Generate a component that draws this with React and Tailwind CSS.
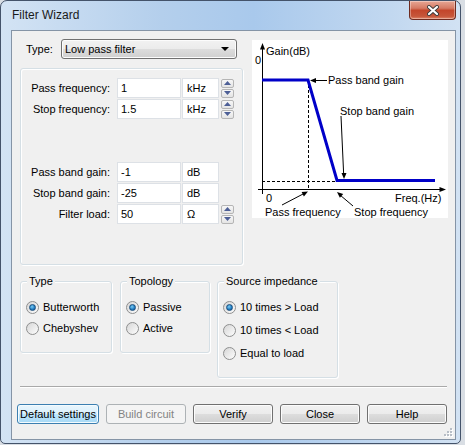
import React from 'react';

const btnBase =
  "flex h-[20px] items-center justify-center rounded-[3px] border text-[11px]";
const btnNormal =
  "border-[#707070] bg-[linear-gradient(#f2f2f2,#ebebeb_50%,#dddddd_50%,#cfcfcf)] shadow-[inset_0_0_0_1px_#fcfcfc] text-black";
const btnHot =
  "border-[#3c7fb1] bg-[linear-gradient(#eaf6fd,#d9f0fc_50%,#bee6fd_50%,#a7d9f5)] shadow-[inset_0_0_0_1px_#f4fbfe] text-black";
const btnDisabled = "border-[#adb2b5] bg-[#f4f4f4] text-[#838383]";

function Spinner() {
  return (
    <div className="ml-[2px] flex flex-col gap-[1px]">
      {[0, 1].map((i) => (
        <div
          key={i}
          className="flex h-[9px] w-[13px] items-center justify-center rounded-[2px] border border-[#b5b5b5] bg-[linear-gradient(#f7f7f7,#e4e4e4)]"
        >
          <svg width="7" height="4" viewBox="0 0 7 4">
            {i === 0 ? (
              <polygon points="3.5,0 7,4 0,4" fill="#4d5f96" />
            ) : (
              <polygon points="0,0 7,0 3.5,4" fill="#4d5f96" />
            )}
          </svg>
        </div>
      ))}
    </div>
  );
}

function Field({ label, value, unit, spin, className = '' }) {
  return (
    <div className={`flex h-[20px] items-center ${className}`}>
      <span className="w-[89px] text-right">{label}</span>
      <div className="ml-[7px] flex h-[20px] w-[64px] items-center border border-[#dde1e6] bg-white pl-[3px]">
        {value}
      </div>
      <div className="ml-[1px] flex h-[20px] w-[37px] items-center border border-[#dde1e6] bg-white pl-[4px]">
        {unit}
      </div>
      {spin && <Spinner />}
    </div>
  );
}

function Radio({ checked, label }) {
  return (
    <div className="flex h-[13px] items-center">
      <div className="flex h-[13px] w-[13px] items-center justify-center rounded-full border border-[#8e8f8f] bg-[linear-gradient(135deg,#d6d6d6,#fdfdfd)]">
        {checked && (
          <div className="h-[7px] w-[7px] rounded-full border border-[#1b4f7e] bg-[radial-gradient(circle_at_40%_35%,#7ccdf4,#1f7ac0_60%,#0e4a86)]" />
        )}
      </div>
      <span className="ml-[4px]">{label}</span>
    </div>
  );
}

function Group({ title, className, children, gap }) {
  return (
    <div
      className={`relative rounded-[3px] border border-[#d5dfe5] shadow-[inset_1px_1px_0_#ffffff,1px_1px_0_#ffffff] ${className}`}
    >
      <span className="absolute left-[6px] top-[-8px] bg-[#f0f0f0] px-[2px] leading-[14px]">
        {title}
      </span>
      <div className={`flex flex-col pl-[5px] pt-[19px] ${gap}`}>{children}</div>
    </div>
  );
}

function Graph() {
  return (
    <div className="ml-[9px] mt-[1px] h-[178px] w-[196px] bg-white">
      <svg width="196" height="178" viewBox="0 0 196 178" className="text-[11px]">
        {/* axes */}
        <line x1="10.5" y1="7" x2="10.5" y2="154" stroke="#000" />
        <polygon points="10.5,3 8,9.5 13,9.5" fill="#000" />
        <line x1="6" y1="149.5" x2="190" y2="149.5" stroke="#000" />
        <polygon points="194,149.5 187.5,147 187.5,152" fill="#000" />
        {/* guides */}
        <line x1="56.5" y1="40" x2="56.5" y2="149" stroke="#000" strokeDasharray="3 2" />
        <line x1="10" y1="141.5" x2="85" y2="141.5" stroke="#000" strokeDasharray="3 2" />
        {/* response */}
        <polyline
          points="10,40 56,40 85,140.5 183,140.5"
          fill="none"
          stroke="#0000c8"
          strokeWidth="3"
        />
        {/* callouts */}
        <line x1="75" y1="40.5" x2="62" y2="40.5" stroke="#000" />
        <polygon points="58,40.5 64,38 64,43" fill="#000" />
        <line x1="89" y1="76" x2="91.6" y2="133" stroke="#000" />
        <polygon points="92,139 89.5,133 94.5,133" fill="#000" />
        <line x1="30" y1="165" x2="52" y2="153.5" stroke="#000" />
        <polygon points="56,151.5 51.9,156.5 49.6,152.1" fill="#000" />
        <line x1="101" y1="166" x2="88" y2="155" stroke="#000" />
        <polygon points="85,152 91.2,154 87.9,157.8" fill="#000" />
        <g fill="#000">
          <text x="14" y="15">Gain(dB)</text>
          <text x="3" y="24">0</text>
          <text x="76" y="44">Pass band gain</text>
          <text x="88" y="75">Stop band gain</text>
          <text x="14" y="162">0</text>
          <text x="143" y="162">Freq.(Hz)</text>
          <text x="13" y="176">Pass frequency</text>
          <text x="102" y="176">Stop frequency</text>
        </g>
      </svg>
    </div>
  );
}

export default function App() {
  return (
    <div className="h-[445px] w-[465px] overflow-hidden bg-[#d9dee4] font-['Liberation_Sans',Arial,sans-serif] text-[11px] text-black">
      {/* Window */}
      <div className="h-[444px] w-[461px] rounded-t-[7px] rounded-b-[5px] border border-[#44536a] bg-[linear-gradient(90deg,#d3e3f4,#b4cfec_35%,#a9c9ec_55%,#c2d8f0_85%,#d2e2f3)]">
        {/* Title bar */}
        <div className="flex h-[29px] items-start">
          <span className="ml-[11px] mt-[7px] text-[12px] leading-[15px] text-[#1a1a1a]">
            Filter Wizard
          </span>
          <div className="ml-auto mr-[4px] flex h-[19px] w-[47px] items-center justify-center rounded-b-[4px] border border-t-0 border-[#6e2b20] bg-[linear-gradient(#e7a795,#d57a64_40%,#c3462b_52%,#c6563a_85%,#e1876b)] shadow-[inset_0_0_0_1px_rgba(255,255,255,0.35)]">
            <svg width="12" height="11" viewBox="0 0 12 11">
              <path d="M2 2 L10 9 M10 2 L2 9" stroke="#3b3b3b" strokeWidth="4" strokeLinecap="round" />
              <path d="M2 2 L10 9 M10 2 L2 9" stroke="#ffffff" strokeWidth="2.2" strokeLinecap="round" />
            </svg>
          </div>
        </div>

        {/* Client area */}
        <div className="relative ml-[10px] h-[410px] w-[445px] border border-[#8594a6] bg-[#f0f0f0]">
          <div className="flex pl-[8px] pt-[8px]">
            <div className="w-[223px]">
              <div className="flex h-[20px] items-center">
                <span className="ml-[6px] w-[35px]">Type:</span>
                <div className={`${btnNormal} flex h-[20px] w-[176px] items-center justify-between rounded-[3px] border pl-[3px] pr-[7px]`}>
                  <span>Low pass filter</span>
                  <svg width="8" height="4" viewBox="0 0 8 4">
                    <polygon points="0,0 8,0 4,4" fill="#000" />
                  </svg>
                </div>
              </div>
              <div className="mt-[9px] h-[197px] rounded-[3px] border border-[#d5dfe5] pt-[9px] shadow-[inset_1px_1px_0_#ffffff,1px_1px_0_#ffffff]">
                <Field label="Pass frequency:" value="1" unit="kHz" spin />
                <Field className="mt-[1px]" label="Stop frequency:" value="1.5" unit="kHz" spin />
                <Field className="mt-[43px]" label="Pass band gain:" value="-1" unit="dB" />
                <Field className="mt-[1px]" label="Stop band gain:" value="-25" unit="dB" />
                <Field className="mt-[1px]" label="Filter load:" value="50" unit="Ω" spin />
              </div>
            </div>
            <Graph />
          </div>

          {/* Option groups */}
          <div className="mt-[16px] flex items-start pl-[8px]">
            <Group title="Type" className="h-[72px] w-[92px]" gap="gap-[8px]">
              <Radio checked label="Butterworth" />
              <Radio label="Chebyshev" />
            </Group>
            <Group title="Topology" className="ml-[8px] h-[72px] w-[90px]" gap="gap-[8px]">
              <Radio checked label="Passive" />
              <Radio label="Active" />
            </Group>
            <Group title="Source impedance" className="ml-[7px] h-[97px] w-[121px]" gap="gap-[10px]">
              <Radio checked label="10 times > Load" />
              <Radio label="10 times < Load" />
              <Radio label="Equal to load" />
            </Group>
          </div>

          <div className="ml-[8px] mt-[8px] h-[2px] w-[427px] border-t border-b border-t-[#a9a9a9] border-b-white" />

          {/* Buttons */}
          <div className="mt-[16px] flex gap-[7px] pl-[5px]">
            <button className={`${btnBase} ${btnHot} w-[82px]`}>Default settings</button>
            <button className={`${btnBase} ${btnDisabled} w-[80px]`}>Build circuit</button>
            <button className={`${btnBase} ${btnNormal} w-[80px]`}>Verify</button>
            <button className={`${btnBase} ${btnNormal} w-[80px]`}>Close</button>
            <button className={`${btnBase} ${btnNormal} w-[80px]`}>Help</button>
          </div>

          {/* Size grip */}
          <svg
            className="absolute bottom-[2px] right-[2px]"
            width="10"
            height="10"
            viewBox="0 0 10 10"
          >
            {[
              [7, 1],
              [4, 4],
              [7, 4],
              [1, 7],
              [4, 7],
              [7, 7],
            ].map(([x, y]) => (
              <g key={`${x}-${y}`}>
                <rect x={x + 1} y={y + 1} width="2" height="2" fill="#ffffff" />
                <rect x={x} y={y} width="2" height="2" fill="#b8bec6" />
              </g>
            ))}
          </svg>
        </div>
      </div>
    </div>
  );
}
